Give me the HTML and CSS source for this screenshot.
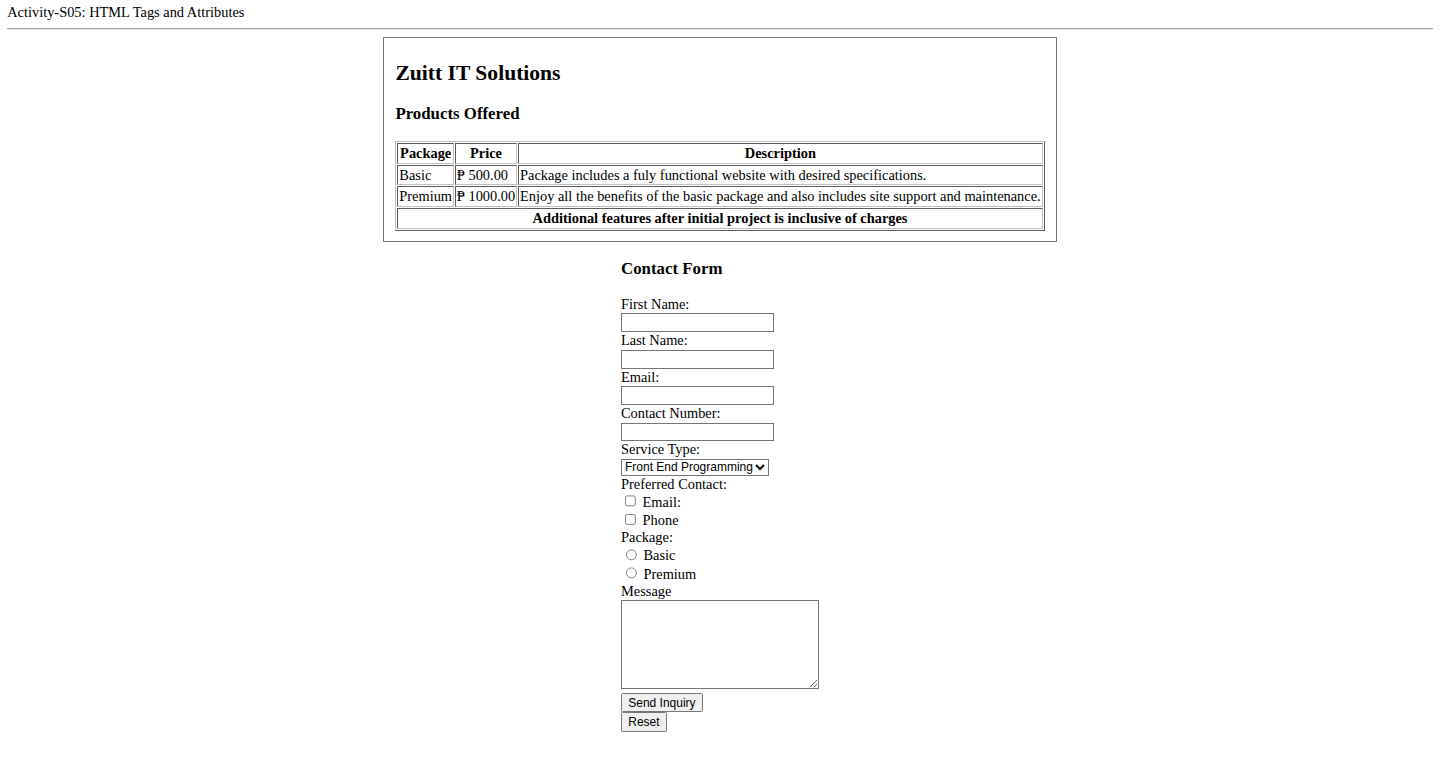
FILE: index.html
```html
<!DOCTYPE html>
<html lang="en">
<head>
<meta charset="utf-8">
<title>Activity-S05: HTML Tags and Attributes</title>
<link rel="stylesheet" href="styles.css">
</head>
<body class="page">
<div class="title">Activity-S05: HTML Tags and Attributes</div>
<hr class="rule">
<section class="card">
  <h2 class="company">Zuitt IT Solutions</h2>
  <h3 class="sub">Products Offered</h3>
  <table class="products">
    <thead>
      <tr><th>Package</th><th>Price</th><th>Description</th></tr>
    </thead>
    <tbody>
      <tr><td>Basic</td><td>₱ 500.00</td><td>Package includes a fuly functional website with desired specifications.</td></tr>
      <tr><td>Premium</td><td>₱ 1000.00</td><td>Enjoy all the benefits of the basic package and also includes site support and maintenance.</td></tr>
    </tbody>
    <tfoot>
      <tr><th colspan="3">Additional features after initial project is inclusive of charges</th></tr>
    </tfoot>
  </table>
</section>
<form class="contact">
  <h3 class="sub">Contact Form</h3>
  <label for="fn">First Name:</label><br>
  <input class="field" type="text" id="fn"><br>
  <label for="ln">Last Name:</label><br>
  <input class="field" type="text" id="ln"><br>
  <label for="em">Email:</label><br>
  <input class="field" type="email" id="em"><br>
  <label for="cn">Contact Number:</label><br>
  <input class="field" type="tel" id="cn"><br>
  <label for="st">Service Type:</label><br>
  <select class="choice" id="st">
    <option>Front End Programming</option>
    <option>Back End Programming</option>
    <option>Full Stack Programming</option>
  </select><br>
  <label>Preferred Contact:</label><br>
  <input class="check" type="checkbox" id="pe"> <label for="pe">Email:</label><br>
  <input class="check" type="checkbox" id="pp"> <label for="pp">Phone</label><br>
  <label>Package:</label><br>
  <input class="radio" type="radio" name="pkg" id="pb"> <label for="pb">Basic</label><br>
  <input class="radio" type="radio" name="pkg" id="pr"> <label for="pr">Premium</label><br>
  <label for="msg">Message</label><br>
  <textarea class="message" id="msg"></textarea><br>
  <button class="btn" type="submit">Send Inquiry</button><br>
  <button class="btn" type="reset">Reset</button>
</form>
</body>
</html>
```

FILE: styles.css
```css
html {
  background: #ffffff;
}

.page {
  zoom: 0.9;
  margin: 4px 8px 8px;
  font-family: "Liberation Serif", "Times New Roman", serif;
  font-size: 16px;
  color: #000000;
}

.rule {
  margin: 8px 0;
  height: 0;
  border: 0;
  border-top: 1px solid #a0a0a0;
  border-bottom: 1px solid #eeeeee;
}

.card {
  width: fit-content;
  margin: 0 auto;
  border: 1px solid #767676;
  padding: 0.35em 13px 11px;
}

.company {
  font-size: 1.5em;
  margin: 0.83em 0;
}

.sub {
  font-size: 1.17em;
  margin: 1em 0;
}

.products {
  border-collapse: separate;
  border-spacing: 2px;
  border: 1px solid;
  border-color: #c0c0c0 #5a5a5a #5a5a5a #c0c0c0;
}

.products th,
.products td {
  padding: 1px;
  height: 19px;
  border: 1px solid;
  border-color: #5a5a5a #c0c0c0 #c0c0c0 #5a5a5a;
}

.products td {
  text-align: left;
}

.contact {
  width: fit-content;
  margin: 0 auto;
}

.field,
.choice,
.btn,
.message {
  font-family: "Liberation Sans", Arial, sans-serif;
  font-size: 13.333px;
}

.field {
  width: 170px;
  box-sizing: border-box;
  height: 21px;
  padding: 1px 2px;
  border: 1px solid #767676;
  border-radius: 0;
  margin: 0.6px 0 0;
}

.choice {
  margin: 0;
  height: 18px;
}

.message {
  width: 220px;
  height: 99px;
  box-sizing: border-box;
  border: 1px solid #767676;
  margin: 0;
}

.btn {
  margin: 0;
  height: 21.5px;
  padding: 1px 7px;
}
```
